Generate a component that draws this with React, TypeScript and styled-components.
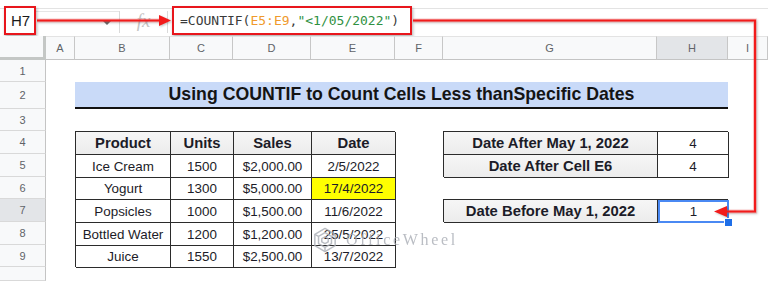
import React from "react";
import styled, { createGlobalStyle } from "styled-components";

const GlobalStyle = createGlobalStyle`
  html, body {
    margin: 0;
    padding: 0;
    background: #ffffff;
    overflow: hidden;
  }
  body {
    font-family: "Liberation Sans", Arial, sans-serif;
  }
`;

const columns = ["A", "B", "C", "D", "E", "F", "G", "H", "I"];
const rowHeights = [22, 27, 22, 23, 23, 22, 23, 23, 22, 14];

const products = [
  { name: "Ice Cream", units: 1500, sales: "$2,000.00", date: "2/5/2022" },
  { name: "Yogurt", units: 1300, sales: "$5,000.00", date: "17/4/2022", mark: true },
  { name: "Popsicles", units: 1000, sales: "$1,500.00", date: "11/6/2022" },
  { name: "Bottled Water", units: 1200, sales: "$1,200.00", date: "25/5/2022" },
  { name: "Juice", units: 1550, sales: "$2,500.00", date: "13/7/2022" },
];

export default function App() {
  return (
    <>
      <GlobalStyle />
      <Page>
        <FormulaBar>
          <NameBox>
            <CellRef>H7</CellRef>
            <DropArrow />
          </NameBox>
          <Divider />
          <FxLabel>fx</FxLabel>
          <Divider />
          <FormulaField>
            <span>=COUNTIF(</span>
            <RangeRef>E5:E9</RangeRef>
            <span>,</span>
            <StringArg>"&lt;1/05/2022"</StringArg>
            <span>)</span>
          </FormulaField>
        </FormulaBar>

        <Sheet>
          <Corner />
          {columns.map((c) => (
            <ColHeader key={c} $active={c === "H"}>
              {c}
            </ColHeader>
          ))}
          {rowHeights.map((_, i) => (
            <RowHeader key={i} $row={i + 2} $active={i + 1 === 7}>
              {i < 9 ? i + 1 : ""}
            </RowHeader>
          ))}

          <TitleBar>Using COUNTIF to Count Cells Less thanSpecific Dates</TitleBar>

          <DataTable>
            <HeadCell>Product</HeadCell>
            <HeadCell>Units</HeadCell>
            <HeadCell>Sales</HeadCell>
            <HeadCell>Date</HeadCell>
            {products.map((p) => (
              <React.Fragment key={p.name}>
                <BodyCell>{p.name}</BodyCell>
                <BodyCell>{p.units}</BodyCell>
                <BodyCell>{p.sales}</BodyCell>
                <BodyCell $mark={p.mark}>{p.date}</BodyCell>
              </React.Fragment>
            ))}
          </DataTable>

          <SummaryTable $row="5 / 7">
            <LabelCell>Date After May 1, 2022</LabelCell>
            <BodyCell>4</BodyCell>
            <LabelCell>Date After Cell E6</LabelCell>
            <BodyCell>4</BodyCell>
          </SummaryTable>

          <SummaryTable $row="8 / 9">
            <LabelCell>Date Before May 1, 2022</LabelCell>
            <SelectedCell>1</SelectedCell>
          </SummaryTable>
        </Sheet>

        <Watermark>
          <svg width="24" height="26" viewBox="0 0 26 28">
            <g fill="none" stroke="#a9adb5" strokeWidth="1.6" strokeLinejoin="round">
              <path d="M13 1.5 L24 7.8 V20.2 L13 26.5 L2 20.2 V7.8 Z" />
              <path d="M13 6 L20 10 V18 L13 22 L6 18 V10 Z" />
              <path d="M13 10.5 L16.5 12.5 V16 L13 18 L9.5 16 V12.5 Z" />
              <path d="M2 7.8 L6 10 M24 7.8 L20 10 M13 26.5 V22" />
            </g>
          </svg>
          <WatermarkText>OfficeWheel</WatermarkText>
        </Watermark>

        <Annotations width="768" height="281" viewBox="0 0 768 281">
          <g fill="none" strokeLinejoin="miter">
            <path d="M37 20.5 H161" stroke="rgba(255,80,80,0.3)" strokeWidth="4" />
            <path d="M37 20.5 H161" stroke="#f21b1b" strokeWidth="2" />
            <path
              d="M413 20.5 H755 V211.5 H726"
              stroke="rgba(255,80,80,0.3)"
              strokeWidth="4"
            />
            <path d="M413 20.5 H755 V211.5 H726" stroke="#f21b1b" strokeWidth="2" />
          </g>
          <polygon points="159,15 171,20.5 159,26" fill="#f21b1b" />
          <polygon points="727,206 714,211.5 727,217" fill="#f21b1b" />
        </Annotations>
      </Page>
    </>
  );
}

const Page = styled.div`
  position: relative;
  width: 768px;
  height: 281px;
  overflow: hidden;
  background: #ffffff;
`;

const FormulaBar = styled.div`
  display: flex;
  align-items: stretch;
  height: 36px;
  padding: 6px 0 1px 4px;
  box-sizing: border-box;
  background: linear-gradient(#e3e3e3, #e3e3e3) 0 8px / 100% 1px no-repeat,
    #ffffff;
`;

const NameBox = styled.div`
  display: flex;
  align-items: center;
  width: 115px;
  padding-right: 8px;
  box-sizing: border-box;
  justify-content: space-between;
  background: linear-gradient(#e6e6e6, #e6e6e6) 32px 5px / 83px 1px no-repeat;
`;

const CellRef = styled.div`
  display: flex;
  align-items: center;
  width: 32px;
  height: 29px;
  box-sizing: border-box;
  padding-left: 5px;
  border: 2px solid #e8161c;
  box-shadow: 1px 2px 3px rgba(0, 0, 0, 0.3);
  font-size: 15px;
  color: #1a1a1a;
  background: #ffffff;
`;

const DropArrow = styled.div`
  width: 0;
  height: 0;
  margin-top: 4px;
  border-left: 4px solid transparent;
  border-right: 4px solid transparent;
  border-top: 4px solid #6b6b6b;
`;

const Divider = styled.div`
  width: 1px;
  margin: 5px 0 2px;
  background: #dadada;
`;

const FxLabel = styled.div`
  display: flex;
  align-items: center;
  justify-content: center;
  width: 47px;
  font-family: "Liberation Serif", serif;
  font-style: italic;
  font-size: 19px;
  color: #c4c4c4;
`;

const FormulaField = styled.div`
  display: flex;
  align-items: center;
  width: 240px;
  height: 29px;
  margin-left: 4px;
  box-sizing: border-box;
  padding-left: 6px;
  border: 2px solid #e8161c;
  box-shadow: 1px 2px 3px rgba(0, 0, 0, 0.3);
  font-family: "DejaVu Sans Mono", monospace;
  font-size: 13px;
  color: #3a3a3a;
  white-space: pre;
  background: #ffffff;
`;

const RangeRef = styled.span`
  color: #ef9a2c;
`;

const StringArg = styled.span`
  color: #2f9142;
`;

const Sheet = styled.div`
  display: grid;
  grid-template-columns: 46px 29px 95px 63px 78px 84px 48px 214px 71px 40px;
  grid-template-rows: 24px ${rowHeights.map((h) => `${h}px`).join(" ")};
`;

const Corner = styled.div`
  grid-column: 1;
  grid-row: 1;
  background: #f8f9fa;
  border-right: 3px solid #c4c7c5;
  border-bottom: 3px solid #c4c7c5;
  box-sizing: border-box;
`;

const ColHeader = styled.div<{ $active?: boolean }>`
  grid-row: 1;
  display: flex;
  align-items: center;
  justify-content: center;
  box-sizing: border-box;
  background: ${(p) => (p.$active ? "#e3e5e8" : "#f8f9fa")};
  border-right: 1px solid #c7c7c7;
  border-bottom: 1px solid #c4c4c4;
  border-top: 1px solid #e3e3e3;
  font-size: 11px;
  color: #5f6368;
`;

const RowHeader = styled.div<{ $row: number; $active?: boolean }>`
  grid-column: 1;
  grid-row: ${(p) => p.$row};
  display: flex;
  align-items: center;
  justify-content: center;
  box-sizing: border-box;
  background: ${(p) => (p.$active ? "#e3e5e8" : "#f8f9fa")};
  border-right: 1px solid #c4c4c4;
  border-bottom: 1px solid #d9d9d9;
  font-size: 11px;
  color: #5f6368;
`;

const TitleBar = styled.div`
  grid-column: 3 / 10;
  grid-row: 3;
  display: flex;
  align-items: center;
  justify-content: center;
  box-sizing: border-box;
  background: #c9daf8;
  border-bottom: 2px solid #111111;
  font-size: 17.7px;
  font-weight: 700;
  color: #141414;
`;

const DataTable = styled.div`
  grid-column: 3 / 7;
  grid-row: 5 / 11;
  display: grid;
  grid-template-columns: 95px 63px 78px 84px;
  grid-template-rows: 23px 23px 22px 23px 23px 22px;
  border-top: 1px solid #2b2b2b;
  border-left: 1px solid #2b2b2b;
  box-sizing: border-box;
`;

const SummaryTable = styled.div<{ $row: string }>`
  grid-column: 8 / 10;
  grid-row: ${(p) => p.$row};
  display: grid;
  grid-template-columns: 214px 71px;
  grid-auto-rows: 23px;
  border-top: 1px solid #2b2b2b;
  border-left: 1px solid #2b2b2b;
  box-sizing: border-box;
`;

const BodyCell = styled.div<{ $mark?: boolean }>`
  display: flex;
  align-items: center;
  justify-content: center;
  box-sizing: border-box;
  border-right: 1px solid #2b2b2b;
  border-bottom: 1px solid #2b2b2b;
  background: ${(p) => (p.$mark ? "#ffff00" : "#ffffff")};
  font-size: 13.4px;
  color: #1c1c28;
  white-space: nowrap;
`;

const HeadCell = styled(BodyCell)`
  background: linear-gradient(#f6f6f6, #ececec);
  font-size: 14.8px;
  font-weight: 700;
`;

const LabelCell = styled(HeadCell)``;

const SelectedCell = styled(BodyCell)`
  position: relative;
  border: 1px solid #4a89f3;
  box-shadow: inset 0 0 0 1px #4a89f3;

  &::after {
    content: "";
    position: absolute;
    right: -5px;
    bottom: -5px;
    width: 7px;
    height: 7px;
    background: #1f6fe8;
    border: 1px solid #ffffff;
  }
`;

const Watermark = styled.div`
  position: absolute;
  left: 313px;
  top: 227px;
  display: flex;
  align-items: center;
  gap: 9px;
  opacity: 0.8;
`;

const WatermarkText = styled.span`
  font-family: "Liberation Serif", serif;
  font-size: 16px;
  letter-spacing: 2.7px;
  color: #a9adb5;
`;

const Annotations = styled.svg`
  position: absolute;
  left: 0;
  top: 0;
  pointer-events: none;
  filter: drop-shadow(1px 1px 1px rgba(0, 0, 0, 0.25));
`;
